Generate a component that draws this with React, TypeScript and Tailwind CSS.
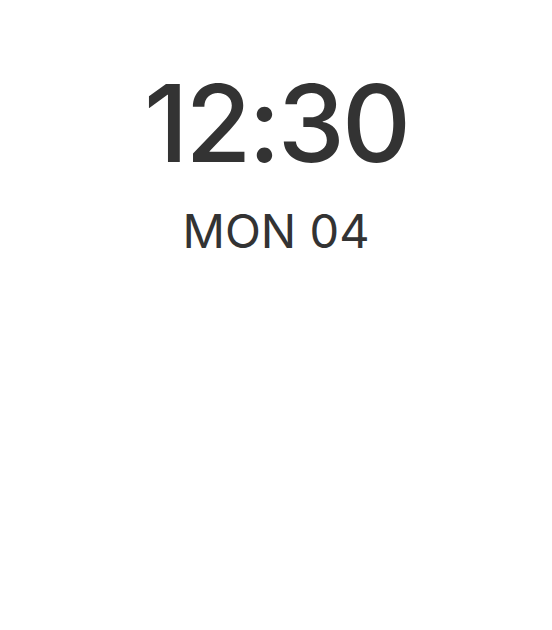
export default function App() {
  return (
    <div className="min-h-[630px] w-full bg-white flex flex-col items-center pt-[70px] text-[#333333] font-['Inter',sans-serif]">
      <div className="text-[107px] leading-none font-medium tracking-[-3px]">12:30</div>
      <div className="mt-[30px] text-[47px] leading-none font-normal">MON 04</div>
    </div>
  );
}
